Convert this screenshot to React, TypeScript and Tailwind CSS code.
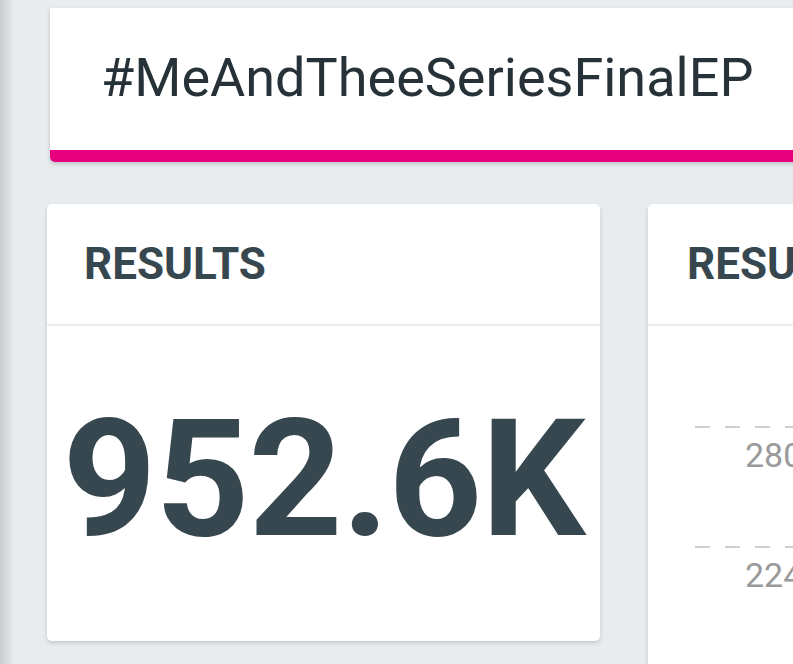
export default function App() {
  return (
    <div className="flex h-[664px] w-[793px] overflow-hidden bg-[#e9ecef] font-['Roboto',sans-serif]">
      {/* left edge strip */}
      <div className="w-3 shrink-0 bg-gradient-to-r from-[#c9ccd0] to-[#e3e6e9]" />

      <div className="flex flex-col pl-[35px] pt-2">
        {/* hashtag banner */}
        <div className="ml-[3px] flex h-[154px] w-[800px] shrink-0 items-center rounded-b-[5px] border-b-[12px] border-[#e6007e] bg-white pb-[3px] pl-[51px] shadow-[0_2px_4px_rgba(0,0,0,0.18)]">
          <span className="text-[54px] font-normal leading-none text-[#263238]">#MeAndTheeSeriesFinalEP</span>
        </div>

        {/* cards */}
        <div className="mt-[42px] flex gap-12">
          <div className="flex h-[437px] w-[553px] shrink-0 flex-col rounded-[5px] bg-white shadow-[0_2px_4px_rgba(0,0,0,0.16)]">
            <div className="flex h-[122px] shrink-0 items-center border-b-2 border-[#e9ecef] px-[37px]">
              <span className="text-[44px] font-bold leading-none text-[#37474f]">RESULTS</span>
            </div>
            <div className="flex flex-1 items-start justify-center pt-[71px]">
              <span className="text-[164px] font-bold leading-none tracking-[-1px] text-[#37474f]">952.6K</span>
            </div>
          </div>

          <div className="flex h-[480px] w-[553px] shrink-0 flex-col rounded-t-[5px] bg-white shadow-[0_2px_4px_rgba(0,0,0,0.16)]">
            <div className="flex h-[122px] shrink-0 items-center border-b-2 border-[#e9ecef] px-[39px]">
              <span className="text-[44px] font-bold leading-none text-[#37474f]">RESULTS</span>
            </div>
            <svg className="ml-[47px] mt-[100px]" width="200" height="200">
              <line x1="0" y1="1" x2="200" y2="1" stroke="#cfcfcf" strokeWidth="2" strokeDasharray="15 15" />
              <text x="50" y="41" fontSize="34" fill="#9a9a9a" fontFamily="Roboto">280</text>
              <line x1="0" y1="121" x2="200" y2="121" stroke="#cfcfcf" strokeWidth="2" strokeDasharray="15 15" />
              <text x="50" y="161" fontSize="34" fill="#9a9a9a" fontFamily="Roboto">224</text>
            </svg>
          </div>
        </div>
      </div>
    </div>
  )
}
